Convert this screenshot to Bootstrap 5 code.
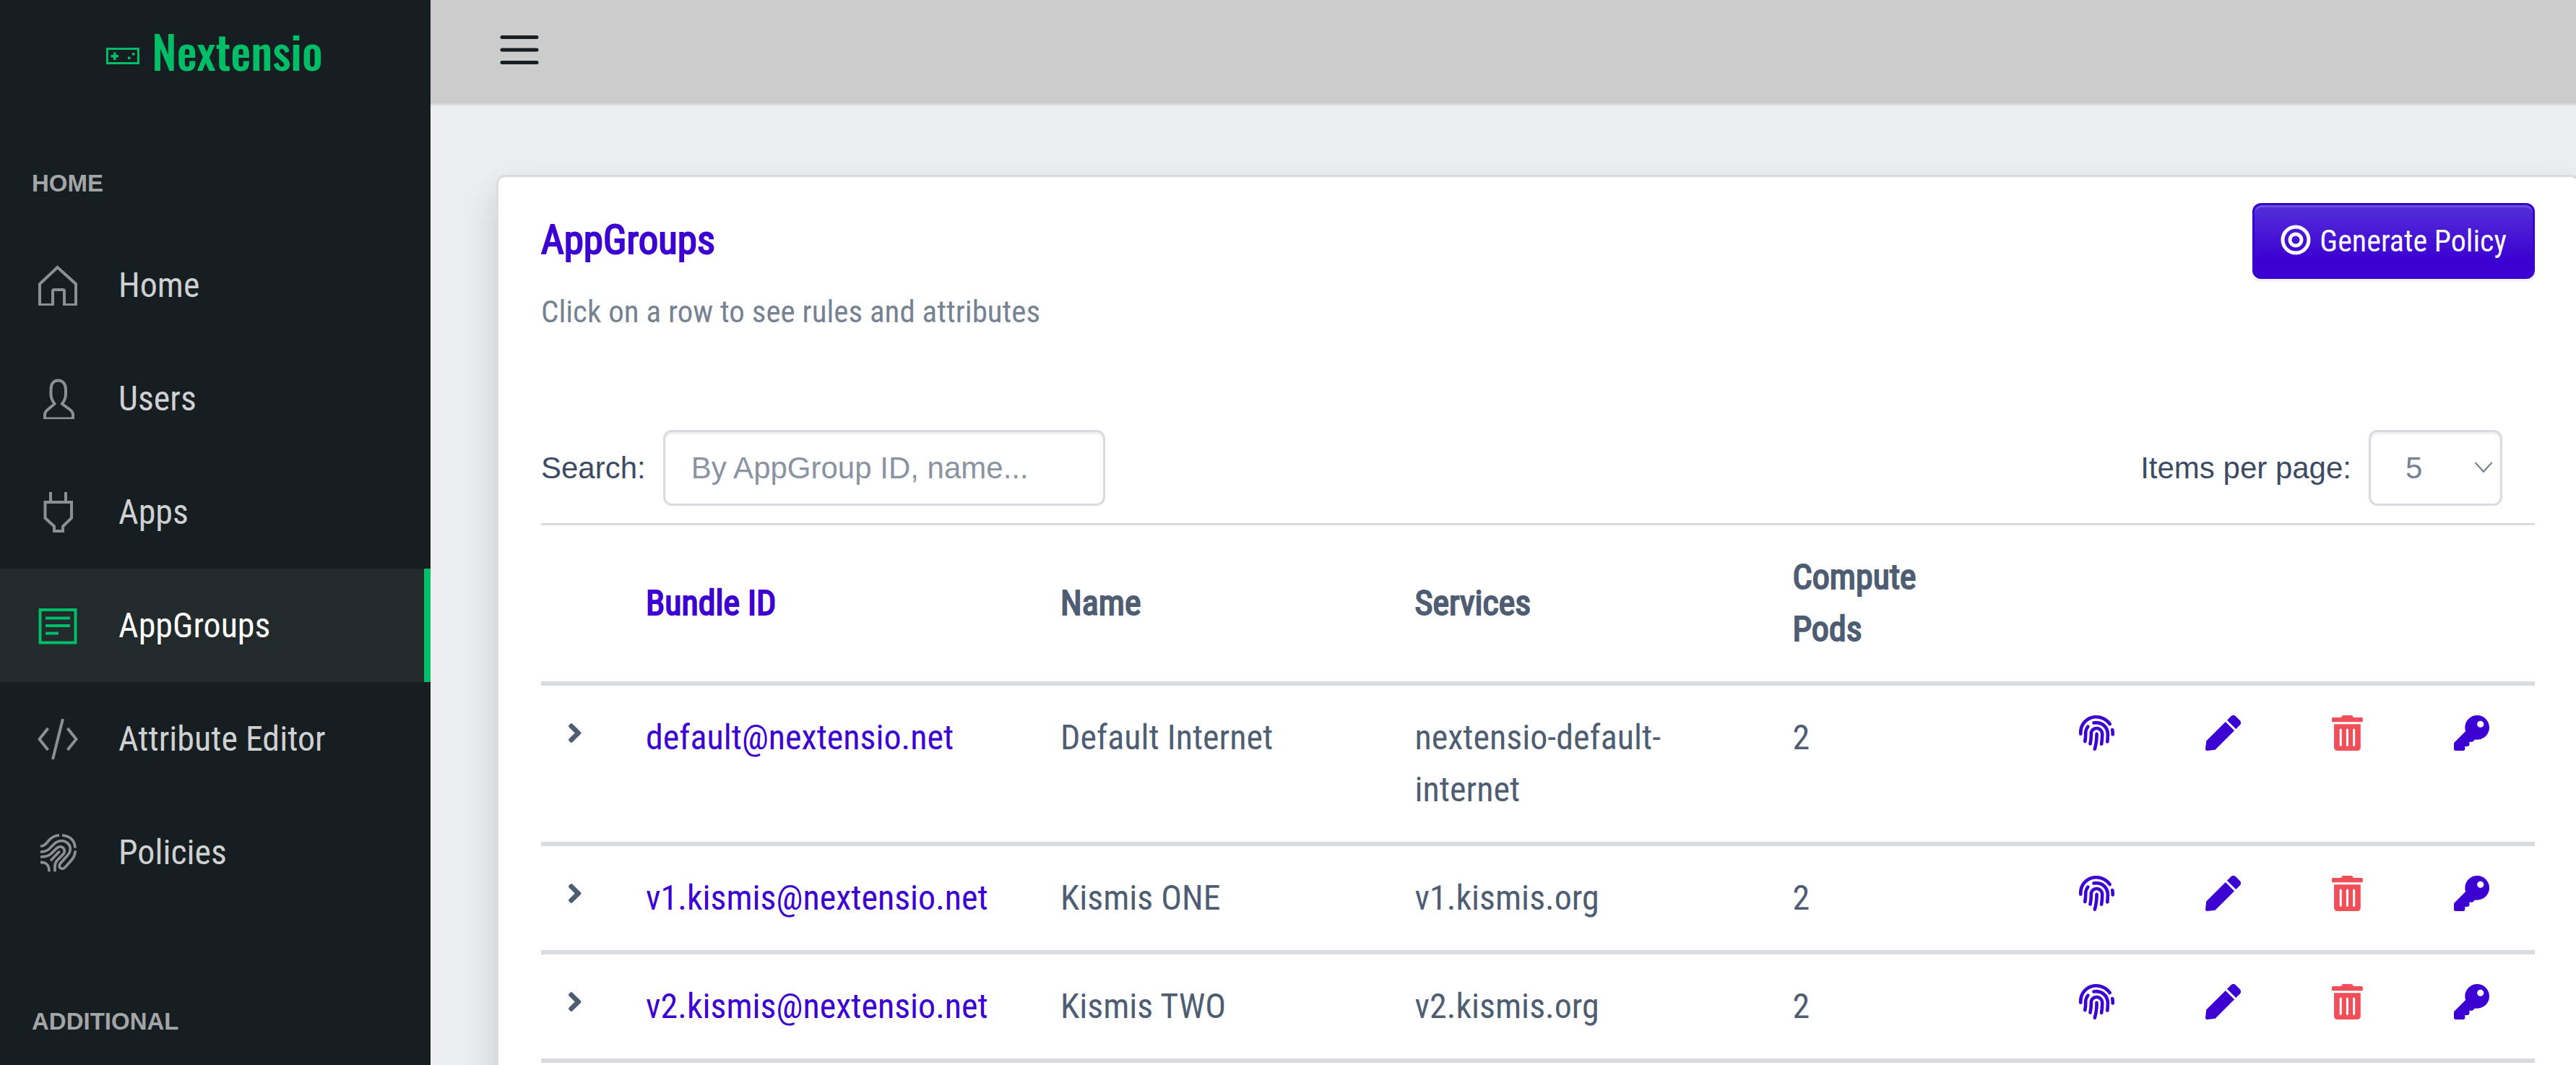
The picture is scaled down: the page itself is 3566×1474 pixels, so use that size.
<!DOCTYPE html>
<html lang="en">
<head>
<meta charset="utf-8">
<meta name="viewport" content="width=device-width, initial-scale=1">
<title>Nextensio - AppGroups</title>
<link href="https://cdn.jsdelivr.net/npm/bootstrap@5.3.0/dist/css/bootstrap.min.css" rel="stylesheet">
<style>
  :root { --brand: #3c00d2; --accent: #00be68; --line: #d8dbe0; }
  body { font-family: "Roboto Condensed", Roboto, sans-serif; font-size: 48px; line-height: 72px; color: #4f5d73; background: #ebedef; overflow: hidden; }
  .arial { font-family: "Liberation Sans", Arial, sans-serif; }
  .side-panel { width: 596px; background: #171e21; }
  .side-logo { height: 146px; padding: 0 2px 6px 0; gap: 17px; font-family: Oswald, "Roboto Condensed", sans-serif; font-size: 63px; font-weight: 500; color: var(--accent); }
  .side-title { margin-top: 48px; padding: 35px 44px 37px; font-size: 33px; line-height: 50px; font-weight: 700; color: #a3a5a6; }
  .side-link { height: 157px; padding: 0 52px; gap: 56px; color: #cfd0d1; border-right: 9px solid transparent; }
  .side-link svg { width: 56px; height: 56px; flex: none; fill: none; stroke: #8c9093; stroke-width: 4; }
  .side-link.active { background: #232a2c; color: #fff; border-right-color: var(--accent); }
  .side-link.active svg { stroke: var(--accent); }
  .side-gap { height: 48px; }
  .top-bar { height: 146px; padding: 0 90px; background: #ccc; border-bottom: 3px solid var(--line); }
  .menu-btn { width: 66px; height: 66px; margin-bottom: 6px; }
  .page-area { padding: 96px 0 0 91px; }
  .panel { margin-right: -5px; padding: 36px 59px 96px; border: 3px solid var(--line); border-radius: 12px; box-shadow: 0 24px 48px rgba(0, 0, 21, .15); }
  .panel-title { padding-top: 18px; margin-bottom: 32px; font-size: 55px; line-height: 67px; font-weight: 400; -webkit-text-stroke: 2px; color: var(--brand); }
  .panel-sub { font-size: 43px; line-height: 66px; color: #768192; }
  .btn-policy { height: 105px; padding: 0 36px; gap: 12px; font-size: 42px; line-height: 68px; color: #fff; border: 3px solid #3700cd; border-radius: 12px; background: linear-gradient(#532fd8, #3c00d2 80%); box-shadow: inset 0 3px 0 rgba(255, 255, 255, .15), 0 3px 3px rgba(0, 0, 0, .075); }
  .btn-policy svg { margin-bottom: 4px; }
  .tools { margin-top: 131px; padding: 0 45px 24px 0; gap: 24px; font-size: 42px; line-height: 62px; color: #3c4b64; border-bottom: 3px solid var(--line); }
  .field { height: 105px; font-size: 42px; color: #768192; border: 3px solid var(--line); border-radius: 12px; box-shadow: inset 0 3px 3px rgba(0, 0, 0, .075); }
  .field::placeholder { color: #8a93a2; opacity: 1; }
  .search-field { width: 612px; padding: 0 36px; }
  .count-field { width: 185px; padding: 0 36px 0 48px; background-image: url("data:image/svg+xml,%3Csvg xmlns='http://www.w3.org/2000/svg' viewBox='0 0 24 16'%3E%3Cpath d='M1 1l11 12L23 1' fill='none' stroke='%23768192' stroke-width='2'/%3E%3C/svg%3E"); background-size: 26px 17px; background-position: right 10px center; }
  .groups { table-layout: fixed; color: #4f5d73; }
  .groups > :not(caption) > * > * { padding: 36px; border-bottom: 6px solid var(--line); color: inherit; background: transparent; }
  .groups th { vertical-align: middle; font-weight: 400; -webkit-text-stroke: 2px; }
  .groups .id-col, .groups a { color: var(--brand); }
  .icon-btn { display: block; height: 72px; padding: 5px 0 18px; border: 0; background: none; color: var(--brand); }
  .icon-btn svg { display: block; height: 49px; fill: currentColor; }
  .icon-btn.del { color: #f04f5a; }
  .icon-btn.exp { color: #4f5d73; }
  .icon-btn.exp svg { height: 43px; }
  .c-exp { width: 3.95%; } .c-id { width: 20.8%; } .c-name { width: 17.77%; } .c-serv { width: 18.95%; } .c-pods { width: 14.37%; }
  .c-fp { width: 6.34%; } .c-pen { width: 6.34%; } .c-del { width: 6.12%; } .c-key { width: 5.36%; }
</style>
<script src="https://cdn.jsdelivr.net/npm/bootstrap@5.3.0/dist/js/bootstrap.bundle.min.js"></script>
</head>
<body>
<svg class="d-none" aria-hidden="true">
  <symbol id="i-finger" viewBox="0 0 512 512"><path d="M256.12 245.96c-13.25 0-24 10.74-24 24 1.14 72.25-8.14 141.9-27.7 211.55-2.73 9.72 2.15 30.49 23.12 30.49 10.48 0 20.11-6.92 23.09-17.52 13.53-47.91 31.04-125.41 29.48-224.52.01-13.25-10.73-24-23.99-24zm-.86-81.73C194 164.16 151.25 211.3 152.1 265.32c.75 47.94-3.75 95.91-13.37 142.55-2.69 12.98 5.67 25.69 18.64 28.36 13.05 2.67 25.67-5.66 28.36-18.64 10.34-50.09 15.17-101.58 14.37-153.02-.41-25.95 19.92-52.49 54.45-52.34 31.31.47 57.15 25.34 57.62 55.47.77 48.05-2.81 96.33-10.61 143.55-2.17 13.06 6.69 25.42 19.76 27.58 19.97 3.33 26.81-15.1 27.58-19.77 8.28-50.03 12.06-101.21 11.27-152.11-.88-55.8-47.94-101.88-104.91-102.72zm-110.69-19.78c-10.3-8.34-25.37-6.8-33.76 3.48-25.62 31.5-39.39 71.28-38.75 112 .59 37.58-2.47 75.27-9.11 112.05-2.34 13.05 6.31 25.53 19.36 27.89 20.11 3.5 27.07-14.81 27.89-19.36 7.19-39.84 10.5-80.66 9.86-121.33-.47-29.88 9.2-57.88 28-80.97 8.35-10.28 6.79-25.39-3.49-33.76zm109.47-62.33c-15.41-.41-30.87 1.44-45.78 4.97-12.89 3.06-20.87 15.98-17.83 28.89 3.06 12.89 16 20.83 28.89 17.83 11.05-2.61 22.47-3.77 34-3.69 75.43 1.13 137.73 61.5 138.88 134.58.59 37.88-1.28 76.11-5.58 113.63-1.5 13.17 7.95 25.08 21.11 26.58 16.72 1.95 25.51-11.88 26.58-21.11a929.06 929.06 0 0 0 5.89-119.85c-1.56-98.75-85.07-180.33-186.16-181.83zm252.07 121.45c-2.86-12.92-15.51-21.2-28.61-18.27-12.94 2.86-21.12 15.66-18.26 28.61 4.71 21.41 4.91 37.41 4.7 61.6-.11 13.27 10.55 24.09 23.8 24.2h.2c13.17 0 23.89-10.61 24-23.8.18-22.18.4-44.11-5.83-72.34zm-40.12-90.72C417.29 43.46 337.6 1.29 252.81.02 183.02-.82 118.47 24.91 70.46 72.94 24.09 119.37-.9 181.04.14 246.65l-.12 21.47c-.39 13.25 10.03 24.31 23.28 24.69.23.02.48.02.72.02 12.92 0 23.59-10.3 23.97-23.3l.16-23.64c-.83-52.5 19.16-101.86 56.28-139 38.76-38.8 91.34-59.67 147.68-58.86 69.45 1.03 134.73 35.56 174.62 92.39 7.61 10.86 22.56 13.45 33.42 5.86 10.84-7.62 13.46-22.59 5.84-33.43z"/></symbol>
  <symbol id="i-pen" viewBox="0 0 512 512"><path d="M290.74 93.24l128.02 128.02-277.99 277.99-114.14 12.6C11.35 513.54-1.56 500.62.14 485.34l12.7-114.22 277.9-277.88zm207.2-19.06l-60.11-60.11c-18.75-18.75-49.16-18.75-67.91 0l-56.55 56.55 128.02 128.02 56.55-56.55c18.75-18.76 18.75-49.16 0-67.91z"/></symbol>
  <symbol id="i-trash" viewBox="0 0 448 512"><path d="M32 464a48 48 0 0 0 48 48h288a48 48 0 0 0 48-48V128H32zm272-256a16 16 0 0 1 32 0v224a16 16 0 0 1-32 0zm-96 0a16 16 0 0 1 32 0v224a16 16 0 0 1-32 0zm-96 0a16 16 0 0 1 32 0v224a16 16 0 0 1-32 0zM432 32H312l-9.4-18.7A24 24 0 0 0 281.1 0H166.8a23.72 23.72 0 0 0-21.4 13.3L136 32H16A16 16 0 0 0 0 48v32a16 16 0 0 0 16 16h416a16 16 0 0 0 16-16V48a16 16 0 0 0-16-16z"/></symbol>
  <symbol id="i-key" viewBox="0 0 512 512"><path d="M512 176.001C512 273.203 433.202 352 336 352c-11.22 0-22.19-1.062-32.827-3.069l-24.012 27.014A23.999 23.999 0 0 1 261.223 384H224v40c0 13.255-10.745 24-24 24h-40v40c0 13.255-10.745 24-24 24H24c-13.255 0-24-10.745-24-24v-78.059c0-6.365 2.529-12.47 7.029-16.971l161.802-161.802C163.108 213.814 160 195.271 160 176 160 78.798 238.797.001 335.999 0 433.488-.001 512 78.511 512 176.001zM336 128c0 26.51 21.49 48 48 48s48-21.49 48-48-21.49-48-48-48-48 21.49-48 48z"/></symbol>
  <symbol id="i-right" viewBox="0 0 256 512"><path d="M224.3 273l-136 136c-9.4 9.4-24.6 9.4-33.9 0l-22.6-22.6c-9.4-9.4-9.4-24.6 0-33.9l96.4-96.4-96.4-96.4c-9.4-9.4-9.4-24.6 0-33.9L54.3 103c9.4-9.4 24.6-9.4 33.9 0l136 136c9.5 9.4 9.5 24.6.1 34z"/></symbol>
</svg>

<div class="d-flex min-vh-100">
  <aside class="side-panel flex-shrink-0">
    <div class="side-logo d-flex align-items-center justify-content-center">
      <svg width="46" height="46" viewBox="0 0 46 46" fill="none" aria-hidden="true">
        <path d="M1.5 20.5h43v20h-43z" stroke="currentColor" stroke-width="3"/>
        <path d="M10 25.500h3.500v3.500h3.500v3.500h-3.500v3.500H10v-3.500H6.500V29H10zM30 31.500h3.500V35H30zM36 26h3.500v3.500H36z" fill="currentColor"/>
      </svg>
      <span>Nextensio</span>
    </div>
    <nav aria-label="Main">
      <div class="side-title arial">HOME</div>
      <a class="side-link d-flex align-items-center text-decoration-none" href="#">
        <svg viewBox="0 0 56 56"><path d="M27.500 3L53 26v29H37V36q0-2-2-2H23q-2 0-2 2v19H3V26z"/></svg>Home</a>
      <a class="side-link d-flex align-items-center text-decoration-none" href="#">
        <svg viewBox="0 0 56 56"><path d="M23.500 35C20 30 18.500 27 18.500 22V15c0-8 4-12.500 10-12.500S39 7 39 15v7c0 5-1.500 8-5 13l11 8q4 3 4 7v5.500H10V50q0-4 4-7z"/></svg>Users</a>
      <a class="side-link d-flex align-items-center text-decoration-none" href="#">
        <svg viewBox="0 0 56 56"><path d="M18 0v13M39 0v13M10.500 14h36.500v22L35 47.500V54H23v-6.500L10.500 36z"/></svg>Apps</a>
      <a class="side-link active d-flex align-items-center text-decoration-none" href="#" aria-current="page">
        <svg viewBox="0 0 56 56"><path d="M3.500 6h49v45.500h-49zM11 17.500h34M11 28h34M11 38.500h18"/></svg>AppGroups</a>
      <a class="side-link d-flex align-items-center text-decoration-none" href="#">
        <svg viewBox="0 0 56 56"><path d="M14.500 13L2.500 28l12 15M41.500 13l12 15-12 15M35 0L21 56"/></svg>Attribute Editor</a>
      <a class="side-link d-flex align-items-center text-decoration-none" href="#">
        <svg viewBox="36 62 168 168" style="stroke-width:11"><path d="M48 119h4c12 0 18-8 27-19q18-24 47-26M138 74q52 6 54 53M193 138c-1 22-10 34-22 46l-22 24c-10 12-30 0-20-15l33-37c14-16 12-36 1-47-14-15-38-16-56-1L84 131c-10 9-20 12-36 12M48 164c20 0 34-4 44-13l22-22c12-12 26-8 31 1 5 8 3 17-4 24l-24 25q-9 9-9 26v20M90 180l38-40M48 186c22 0 36 8 36 39"/></svg>Policies</a>
      <div class="side-gap"></div>
      <div class="side-title arial">ADDITIONAL</div>
    </nav>
  </aside>

  <div class="flex-grow-1">
    <header class="top-bar d-flex align-items-center">
      <button class="menu-btn btn p-0 border-0 d-flex" type="button" aria-label="Toggle menu">
        <svg class="m-auto" width="66" height="66" viewBox="0 0 66 66" fill="none" stroke="#181e21" stroke-width="5" stroke-linecap="round" aria-hidden="true"><path d="M9 15.500h48M9 33h48M9 50.500h48"/></svg>
      </button>
    </header>
    <main class="page-area">
      <section class="panel bg-white">
        <div class="d-flex justify-content-between align-items-start">
          <div>
            <h1 class="panel-title">AppGroups</h1>
            <p class="panel-sub mb-0">Click on a row to see rules and attributes</p>
          </div>
          <button class="btn-policy d-flex align-items-center" type="button">
            <svg width="42" height="42" viewBox="0 0 42 42" fill="none" stroke="currentColor" stroke-width="5" aria-hidden="true"><circle cx="21" cy="21" r="18"/><circle cx="21" cy="21" r="8"/></svg>
            Generate Policy
          </button>
        </div>
        <div class="tools arial d-flex align-items-center">
          <label for="search">Search:</label>
          <input id="search" class="field search-field form-control" type="text" placeholder="By AppGroup ID, name...">
          <label for="count" class="ms-auto">Items per page:</label>
          <select id="count" class="field count-field form-select"><option>5</option><option>10</option><option>20</option></select>
        </div>
        <table class="groups table mb-0">
          <colgroup><col class="c-exp"><col class="c-id"><col class="c-name"><col class="c-serv"><col class="c-pods"><col class="c-fp"><col class="c-pen"><col class="c-del"><col class="c-key"></colgroup>
          <thead>
            <tr><th></th><th class="id-col" scope="col">Bundle ID</th><th scope="col">Name</th><th scope="col">Services</th><th scope="col">Compute<br>Pods</th><th></th><th></th><th></th><th></th></tr>
          </thead>
          <tbody>
            <tr>
              <td><button class="icon-btn exp" type="button" aria-label="Expand"><svg viewBox="0 0 256 512"><use href="#i-right"/></svg></button></td>
              <td><a class="text-decoration-none" href="#">default@nextensio.net</a></td><td>Default Internet</td><td>nextensio-default-internet</td><td>2</td>
              <td><button class="icon-btn" type="button" aria-label="Attributes"><svg viewBox="0 0 512 512"><use href="#i-finger"/></svg></button></td>
              <td><button class="icon-btn" type="button" aria-label="Edit"><svg viewBox="0 0 512 512"><use href="#i-pen"/></svg></button></td>
              <td><button class="icon-btn del" type="button" aria-label="Delete"><svg viewBox="0 0 448 512"><use href="#i-trash"/></svg></button></td>
              <td><button class="icon-btn" type="button" aria-label="Keys"><svg viewBox="0 0 512 512"><use href="#i-key"/></svg></button></td>
            </tr>
            <tr>
              <td><button class="icon-btn exp" type="button" aria-label="Expand"><svg viewBox="0 0 256 512"><use href="#i-right"/></svg></button></td>
              <td><a class="text-decoration-none" href="#">v1.kismis@nextensio.net</a></td><td>Kismis ONE</td><td>v1.kismis.org</td><td>2</td>
              <td><button class="icon-btn" type="button" aria-label="Attributes"><svg viewBox="0 0 512 512"><use href="#i-finger"/></svg></button></td>
              <td><button class="icon-btn" type="button" aria-label="Edit"><svg viewBox="0 0 512 512"><use href="#i-pen"/></svg></button></td>
              <td><button class="icon-btn del" type="button" aria-label="Delete"><svg viewBox="0 0 448 512"><use href="#i-trash"/></svg></button></td>
              <td><button class="icon-btn" type="button" aria-label="Keys"><svg viewBox="0 0 512 512"><use href="#i-key"/></svg></button></td>
            </tr>
            <tr>
              <td><button class="icon-btn exp" type="button" aria-label="Expand"><svg viewBox="0 0 256 512"><use href="#i-right"/></svg></button></td>
              <td><a class="text-decoration-none" href="#">v2.kismis@nextensio.net</a></td><td>Kismis TWO</td><td>v2.kismis.org</td><td>2</td>
              <td><button class="icon-btn" type="button" aria-label="Attributes"><svg viewBox="0 0 512 512"><use href="#i-finger"/></svg></button></td>
              <td><button class="icon-btn" type="button" aria-label="Edit"><svg viewBox="0 0 512 512"><use href="#i-pen"/></svg></button></td>
              <td><button class="icon-btn del" type="button" aria-label="Delete"><svg viewBox="0 0 448 512"><use href="#i-trash"/></svg></button></td>
              <td><button class="icon-btn" type="button" aria-label="Keys"><svg viewBox="0 0 512 512"><use href="#i-key"/></svg></button></td>
            </tr>
          </tbody>
        </table>
      </section>
    </main>
  </div>
</div>
</body>
</html>
